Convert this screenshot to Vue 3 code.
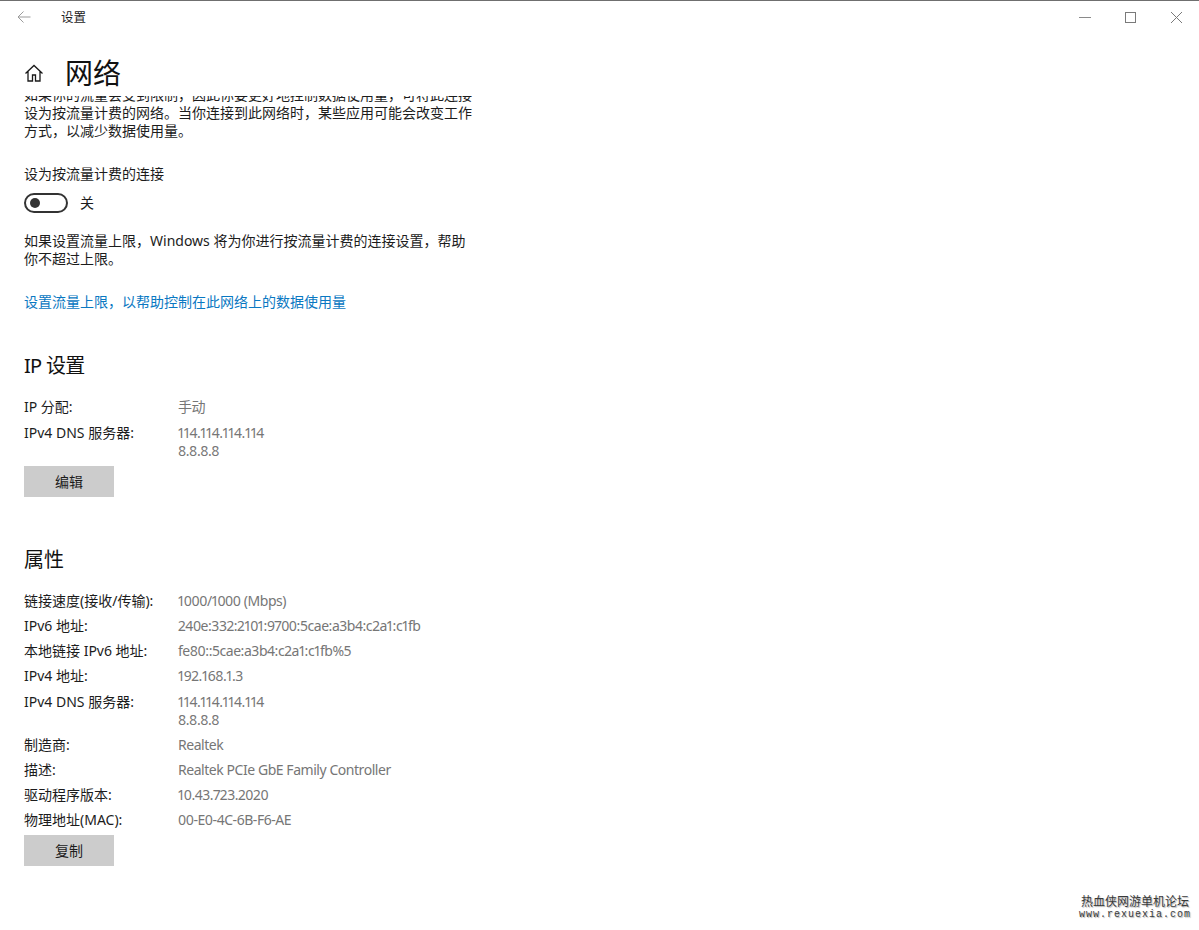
<template>
  <div class="window">
    <div class="titlebar">
      <div class="back">
        <svg width="16" height="16" viewBox="0 0 16 16"><path d="M14.5 8H2M7.5 2.5L2 8l5.5 5.5" fill="none" stroke="#9b9b9b" stroke-width="1" /></svg>
      </div>
      <span class="app-name">设置</span>
      <div class="win-controls">
        <svg width="46" height="32" viewBox="0 0 46 32"><path d="M18 16.500h12" stroke="#8a8a8a" fill="none" /></svg>
        <svg width="46" height="32" viewBox="0 0 46 32"><rect x="18.500" y="11.500" width="10" height="10" stroke="#7a7a7a" fill="none" /></svg>
        <svg width="46" height="32" viewBox="0 0 46 32"><path d="M18 11l11 11M29 11L18 22" stroke="#7a7a7a" fill="none" /></svg>
      </div>
    </div>

    <header class="page-head">
      <svg class="home" width="20" height="20" viewBox="0 0 20 20">
        <path d="M1.500 10.500L10 2.500l8.500 8M4 8.500V18h4.500v-6h3v6H16V8.500" fill="none" stroke="#1a1a1a" stroke-width="1.300" />
      </svg>
      <h1>网络</h1>
    </header>

    <main class="scroller">
      <div class="content">
        <p class="para">如果你的流量会受到限制，因此你要更好地控制数据使用量，可将此连接设为按流量计费的网络。当你连接到此网络时，某些应用可能会改变工作方式，以减少数据使用量。</p>

        <div class="toggle-label">设为按流量计费的连接</div>
        <div class="toggle-row">
          <span class="toggle"><span class="knob"></span></span>
          <span>关</span>
        </div>

        <p class="para limit">如果设置流量上限，Windows 将为你进行按流量计费的连接设置，帮助你不超过上限。</p>
        <a class="link">设置流量上限，以帮助控制在此网络上的数据使用量</a>

        <h2 class="ip-title">IP 设置</h2>
        <dl class="props">
          <template v-for="row in ipRows" :key="row.label">
            <dt :class="{ tall: row.values.length > 1 }">{{ row.label }}</dt>
            <dd :class="{ tall: row.values.length > 1 }"><div v-for="v in row.values" :key="v">{{ v }}</div></dd>
          </template>
        </dl>
        <button class="btn">编辑</button>

        <h2 class="prop-title">属性</h2>
        <dl class="props">
          <template v-for="row in propRows" :key="row.label">
            <dt :class="{ tall: row.values.length > 1 }">{{ row.label }}</dt>
            <dd :class="{ tall: row.values.length > 1 }"><div v-for="v in row.values" :key="v">{{ v }}</div></dd>
          </template>
        </dl>
        <button class="btn">复制</button>
      </div>
    </main>

    <div class="watermark">
      <div class="wm-cn">热血侠网游单机论坛</div>
      <div class="wm-en">www.rexuexia.com</div>
    </div>
  </div>
</template>

<script setup>
const dns = ['114.114.114.114', '8.8.8.8']

const ipRows = [
  { label: 'IP 分配:', values: ['手动'] },
  { label: 'IPv4 DNS 服务器:', values: dns }
]

const propRows = [
  { label: '链接速度(接收/传输):', values: ['1000/1000 (Mbps)'] },
  { label: 'IPv6 地址:', values: ['240e:332:2101:9700:5cae:a3b4:c2a1:c1fb'] },
  { label: '本地链接 IPv6 地址:', values: ['fe80::5cae:a3b4:c2a1:c1fb%5'] },
  { label: 'IPv4 地址:', values: ['192.168.1.3'] },
  { label: 'IPv4 DNS 服务器:', values: dns },
  { label: '制造商:', values: ['Realtek'] },
  { label: '描述:', values: ['Realtek PCIe GbE Family Controller'] },
  { label: '驱动程序版本:', values: ['10.43.723.2020'] },
  { label: '物理地址(MAC):', values: ['00-E0-4C-6B-F6-AE'] }
]
</script>

<style>
html,
body {
  margin: 0;
  background: #fff;
}
</style>

<style scoped>
.window {
  position: relative;
  width: 1199px;
  height: 930px;
  overflow: hidden;
  box-sizing: border-box;
  border-top: 1px solid #6f6f6f;
  background: #fff;
  color: #1c1c1c;
  font-family: "Noto Sans", "Noto Sans CJK SC", sans-serif;
  font-size: 14px;
  line-height: 18px;
}

.titlebar {
  display: flex;
  align-items: center;
  height: 32px;
}

.back {
  display: flex;
  width: 61px;
  padding-left: 16px;
  box-sizing: border-box;
}

.app-name {
  font-size: 12.500px;
  padding-top: 1px;
}

.win-controls {
  display: flex;
  align-self: flex-start;
  margin-left: auto;
}

.page-head {
  display: flex;
  align-items: center;
  gap: 21px;
  height: 63px;
  padding: 16px 0 0 24px;
  box-sizing: border-box;
}

.home {
  flex: none;
}

h1 {
  margin: 0;
  font-size: 28px;
  line-height: 36px;
  font-weight: 400;
  color: #111;
}

.scroller {
  height: 834px;
  overflow: hidden;
}

.content {
  width: 448px;
  margin-top: -10px;
  padding-left: 24px;
}

.para {
  margin: 0;
}

.toggle-label {
  margin-top: 25px;
}

.toggle-row {
  display: flex;
  align-items: center;
  gap: 12px;
  margin-top: 10px;
  height: 20px;
}

.toggle {
  display: flex;
  align-items: center;
  width: 44px;
  height: 20px;
  box-sizing: border-box;
  border: 2px solid #333;
  border-radius: 10px;
  padding-left: 4px;
}

.knob {
  width: 10px;
  height: 10px;
  border-radius: 50%;
  background: #333;
}

.limit {
  margin-top: 19px;
}

.link {
  display: block;
  margin-top: 25px;
  color: #0a78c2;
}

h2 {
  margin: 0;
  font-size: 20px;
  line-height: 28px;
  font-weight: 400;
  color: #111;
}

.ip-title {
  margin-top: 41px;
  letter-spacing: -0.7px;
}

.prop-title {
  margin-top: 49px;
}

.props {
  display: grid;
  grid-template-columns: 154px 1fr;
  row-gap: 7px;
  margin: 18px 0 0;
}

dt {
  margin: 0;
}

dd {
  margin: 0;
  color: #767676;
  white-space: nowrap;
  font-variant-numeric: proportional-nums;
  letter-spacing: -0.45px;
}

.tall {
  margin-top: 1px;
}

.btn {
  display: block;
  width: 90px;
  height: 31px;
  margin-top: 6px;
  padding: 0;
  border: 0;
  background: #cccccc;
  color: #1c1c1c;
  font: inherit;
}

.watermark {
  position: absolute;
  right: 8px;
  bottom: 10px;
  width: 112px;
  text-align: center;
  color: #3a3a3a;
  text-shadow: 1px 1px 1px #b0b0b0;
}

.wm-cn {
  font-size: 12px;
  line-height: 14px;
  white-space: nowrap;
}

.wm-en {
  font-family: "Liberation Mono", monospace;
  font-size: 10px;
  line-height: 11px;
  letter-spacing: 1px;
  white-space: nowrap;
}
</style>
